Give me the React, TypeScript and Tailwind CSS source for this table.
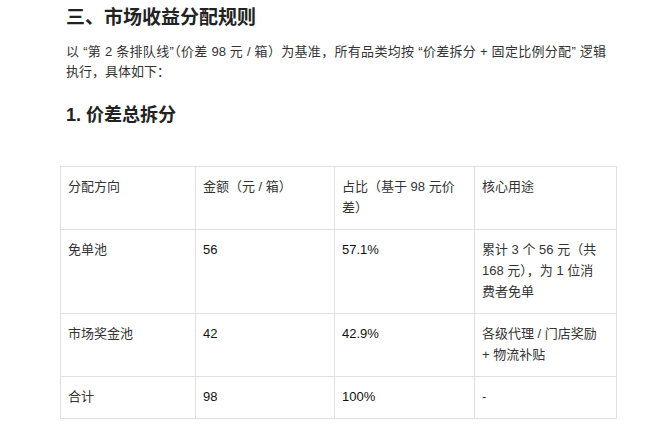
const rows = [
  {
    dir: "免单池",
    amount: "56",
    ratio: "57.1%",
    use: ["累计 3 个 56 元（共", "168 元），为 1 位消", "费者免单"],
  },
  { dir: "市场奖金池", amount: "42", ratio: "42.9%", use: ["各级代理 / 门店奖励", "+ 物流补贴"] },
  { dir: "合计", amount: "98", ratio: "100%", use: ["-"] },
];

const cell = "border border-[#dfdfdf] px-[7px] pt-[9px] pb-[11px] align-top text-left font-normal";

function Lines({ parts }: { parts: string[] }) {
  return (
    <>
      {parts.map((p) => (
        <span key={p} className="block whitespace-nowrap">
          {p}
        </span>
      ))}
    </>
  );
}

export default function App() {
  return (
    <div
      className="min-h-screen bg-white text-[#333] pt-[4px]"
      style={{ fontFamily: '"Liberation Sans", Arial, "Noto Sans CJK SC", sans-serif' }}
    >
      <div className="pl-[66px]">
        <h2 className="text-[19px] leading-[28px] font-bold text-[#222]">三、市场收益分配规则</h2>
        <div className="mt-[10px] w-[540px] text-[13px] leading-[20px]">
          <p className="text-justify [text-align-last:justify] [text-justify:inter-character]">
            以 “第 2 条排队线”（价差 98 元 / 箱）为基准，所有品类均按 “价差拆分 + 固定比例分配” 逻辑
          </p>
          <p>执行，具体如下：</p>
        </div>
        <h3 className="mt-[20px] text-[18px] leading-[26px] font-bold text-[#222]">1. 价差总拆分</h3>
      </div>
      <table className="ml-[60px] mt-[38px] border-collapse text-[13px] leading-[21px]">
        <thead>
          <tr>
            <th className={`${cell} w-[135px]`}>分配方向</th>
            <th className={`${cell} w-[139px]`}>金额（元 / 箱）</th>
            <th className={`${cell} w-[140px]`}>
              <Lines parts={["占比（基于 98 元价", "差）"]} />
            </th>
            <th className={`${cell} w-[142px]`}>核心用途</th>
          </tr>
        </thead>
        <tbody>
          {rows.map((r) => (
            <tr key={r.dir}>
              <td className={cell}>{r.dir}</td>
              <td className={`${cell} text-[#111]`}>{r.amount}</td>
              <td className={`${cell} text-[#111]`}>{r.ratio}</td>
              <td className={cell}>
                <Lines parts={r.use} />
              </td>
            </tr>
          ))}
        </tbody>
      </table>
    </div>
  );
}
